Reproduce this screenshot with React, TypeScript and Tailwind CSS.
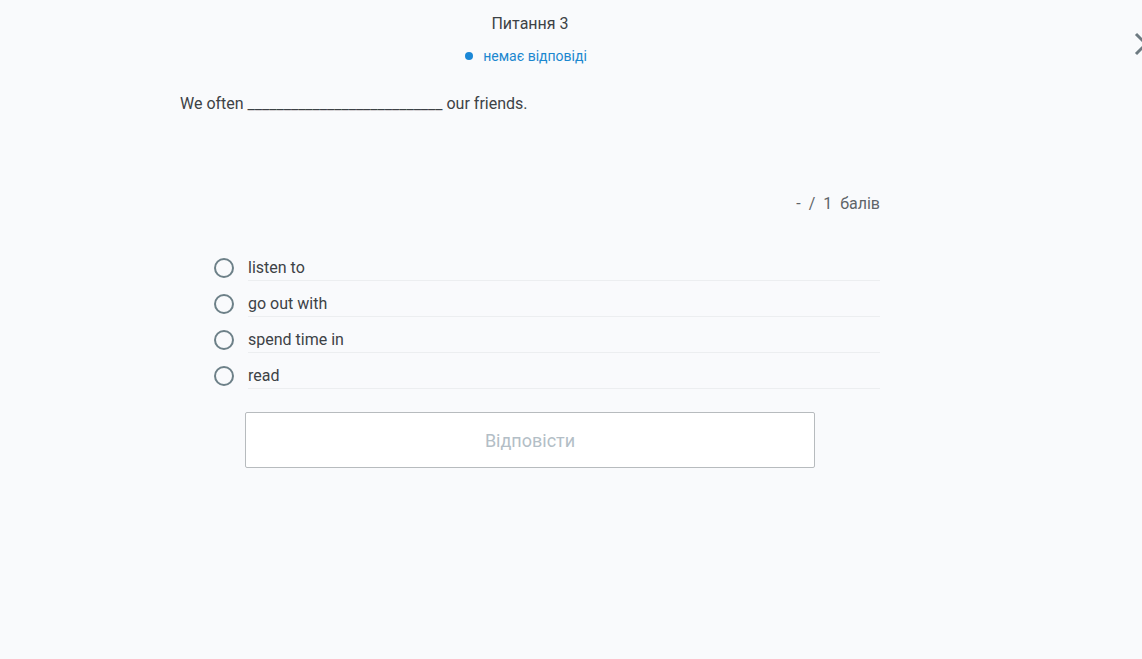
import React from "react";

const options = ["listen to", "go out with", "spend time in", "read"];

const App = () => {
  return (
    <div className="relative w-full h-[659px] bg-[#f9fafc] overflow-hidden font-['Roboto',sans-serif] text-[#3c4043]">
      <div className="w-[1060px]">
        <div className="flex flex-col items-center pt-[14px]">
          <h2 className="text-[16px] leading-[20px] text-[#3d4246]">Питання 3</h2>
          <div className="flex items-center gap-[10px] mt-[13px] mr-[8px] text-[14px] leading-[18px] text-[#1b87cf]">
            <span className="w-[8px] h-[8px] rounded-full bg-[#1b87d6]" />
            <span>немає відповіді</span>
          </div>
        </div>

        <div className="w-[700px] mx-auto">
          <p className="mt-[28px] text-[16px] leading-[22px] text-[#3d4246]">
            We often ___________________________ our friends.
          </p>

          <div className="mt-[78px] flex justify-end text-[16px] leading-[22px] text-[#5f6468] whitespace-pre">
            -  /  1  балів
          </div>

          <div className="mt-[40px] flex flex-col">
            {options.map((o) => (
              <label key={o} className="flex items-start h-[36px] pl-[34px]">
                <span className="h-[26px] flex items-center shrink-0">
                  <span className="w-[20px] h-[20px] rounded-full border-2 border-[#6d8088]" />
                </span>
                <span className="ml-[14px] flex-1 h-[26px] flex items-center border-b border-[#eceef0] text-[16px] text-[#3d4246]">
                  {o}
                </span>
              </label>
            ))}
          </div>

          <div className="mt-[13px] pl-[65px]">
            <button className="w-[570px] h-[56px] bg-white border border-[#b7bbbe] rounded-[2px] text-[18px] text-[#b3bec6]">
              Відповісти
            </button>
          </div>
        </div>
      </div>

      <svg
        className="absolute left-[1133px] top-[32px]"
        width="20"
        height="24"
        viewBox="0 0 20 24"
        fill="none"
        stroke="#6d7a81"
        strokeWidth="3"
      >
        <path d="M3 2 L13 12 L3 22" />
        <path d="M23 2 L13 12 L23 22" />
      </svg>
    </div>
  );
};

export default App;
